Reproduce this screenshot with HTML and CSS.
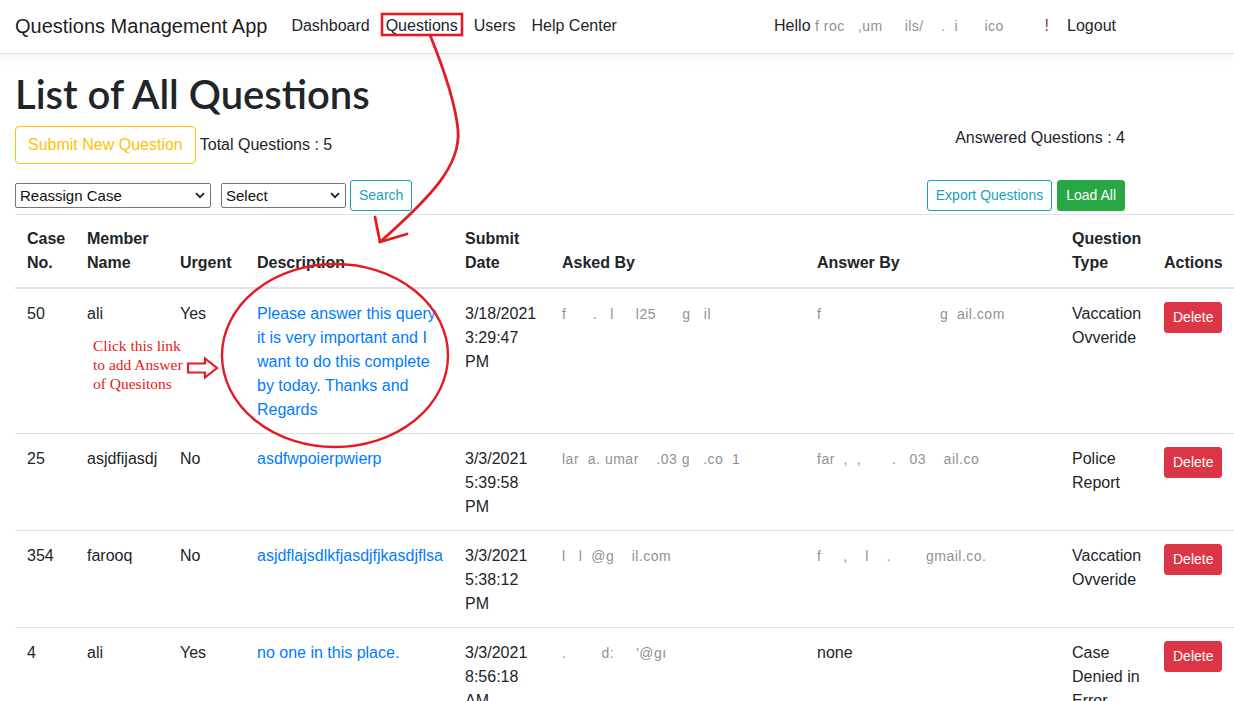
FILE: index.html
```html
<!DOCTYPE html>
<html lang="en">
<head>
<meta charset="utf-8">
<title>Questions Management App</title>
<link rel="stylesheet" href="styles.css">
</head>
<body>
<header class="navbar">
  <a class="brand" href="#">Questions Management App</a>
  <nav class="nav-main">
    <a class="nav-link" href="#">Dashboard</a>
    <a class="nav-link" href="#">Questions</a>
    <a class="nav-link" href="#">Users</a>
    <a class="nav-link" href="#">Help Center</a>
  </nav>
  <div class="nav-right">
    <span class="hello"><span class="hello-text">Hello <span class="redact">f roc   ,um     ils/    .  i      ico</span></span><span class="bang">!</span></span>
    <a class="nav-link" href="#">Logout</a>
  </div>
</header>

<main class="main">
  <h1 class="title">List of All Questions</h1>
  <div class="top-row">
    <div class="top-left">
      <button class="btn btn-outline-warning">Submit New Question</button>
      <span class="count">Total Questions : 5</span>
    </div>
    <span class="count answered">Answered Questions : 4</span>
  </div>
  <div class="tool-row">
    <div class="tool-left">
      <span class="select-wrap sel-1">
        <select class="select"><option>Reassign Case</option></select>
        <svg class="chev" width="10" height="7" viewBox="0 0 10 7"><path d="M1 1.2 5 5.2 9 1.2" fill="none" stroke="#222" stroke-width="1.8"/></svg>
      </span>
      <span class="select-wrap sel-2">
        <select class="select"><option>Select</option></select>
        <svg class="chev" width="10" height="7" viewBox="0 0 10 7"><path d="M1 1.2 5 5.2 9 1.2" fill="none" stroke="#222" stroke-width="1.8"/></svg>
      </span>
      <button class="btn btn-sm btn-outline-info">Search</button>
    </div>
    <div class="tool-right">
      <button class="btn btn-sm btn-outline-info">Export Questions</button>
      <button class="btn btn-sm btn-success">Load All</button>
    </div>
  </div>

  <table class="table">
    <colgroup>
      <col class="c-case"><col class="c-member"><col class="c-urgent"><col class="c-desc"><col class="c-date"><col class="c-asked"><col class="c-answer"><col class="c-type"><col class="c-actions">
    </colgroup>
    <thead>
      <tr>
        <th>Case No.</th><th>Member Name</th><th>Urgent</th><th>Description</th><th>Submit Date</th><th>Asked By</th><th>Answer By</th><th>Question Type</th><th>Actions</th>
      </tr>
    </thead>
    <tbody>
      <tr>
        <td>50</td><td>ali</td><td>Yes</td>
        <td><a class="link" href="#">Please answer this query it is very important and I want to do this complete by today. Thanks and Regards</a></td>
        <td>3/18/2021 3:29:47 PM</td>
        <td><span class="redact">f      .   l     l25      g   il</span></td>
        <td><span class="redact">f                           g  ail.com</span></td>
        <td>Vaccation Ovveride</td>
        <td><button class="btn btn-sm btn-danger">Delete</button></td>
      </tr>
      <tr>
        <td>25</td><td>asjdfijasdj</td><td>No</td>
        <td><a class="link" href="#">asdfwpoierpwierp</a></td>
        <td>3/3/2021 5:39:58 PM</td>
        <td><span class="redact">lar  a. umar    .03 g   .co  1</span></td>
        <td><span class="redact">far  ,  ,       .   03    ail.co</span></td>
        <td>Police Report</td>
        <td><button class="btn btn-sm btn-danger">Delete</button></td>
      </tr>
      <tr>
        <td>354</td><td>farooq</td><td>No</td>
        <td><a class="link" href="#">asjdflajsdlkfjasdjfjkasdjflsa</a></td>
        <td>3/3/2021 5:38:12 PM</td>
        <td><span class="redact">l   l  @g    il.com</span></td>
        <td><span class="redact">f     ,    l    .        gmail.co.</span></td>
        <td>Vaccation Ovveride</td>
        <td><button class="btn btn-sm btn-danger">Delete</button></td>
      </tr>
      <tr>
        <td>4</td><td>ali</td><td>Yes</td>
        <td><a class="link" href="#">no one in this place.</a></td>
        <td>3/3/2021 8:56:18 AM</td>
        <td><span class="redact">.        d:     '@gı</span></td>
        <td>none</td>
        <td>Case Denied in Error</td>
        <td><button class="btn btn-sm btn-danger">Delete</button></td>
      </tr>
    </tbody>
  </table>
</main>

<div class="note">Click this link<br>to add Answer<br>of Quesitons</div>

<svg class="overlay" width="1234" height="701" viewBox="0 0 1234 701" aria-hidden="true">
  <rect x="382" y="14" width="80" height="21" fill="none" stroke="#e31b23" stroke-width="2.6"/>
  <path d="M430 35 C441 62 455 100 458 130 C461 165 432 196 380 242" fill="none" stroke="#e31b23" stroke-width="2.8" stroke-linecap="round"/>
  <path d="M375 217 L380 242 L407 234" fill="none" stroke="#e31b23" stroke-width="2.8" stroke-linecap="round" stroke-linejoin="round"/>
  <ellipse cx="335" cy="355.5" rx="113" ry="91.5" fill="none" stroke="#e31b23" stroke-width="2.4"/>
  <polygon points="188,363.5 205,363.5 205,358.5 217,368 205,377.5 205,372.5 188,372.5" fill="#fff" stroke="#e31b23" stroke-width="2.2"/>
</svg>
</body>
</html>
```

FILE: styles.css
```css
* { box-sizing: border-box; }

html, body { height: 701px; }

body {
  margin: 0;
  position: relative;
  overflow: hidden;
  font-family: "Liberation Sans", Arial, sans-serif;
  font-size: 16px;
  line-height: 1.5;
  color: #212529;
  background: #fff;
}

a { text-decoration: none; }

/* ---------- navbar ---------- */
.navbar {
  display: flex;
  align-items: center;
  height: 54px;
  padding: 0 15px 1px;
  border-bottom: 1px solid #dee2e6;
  box-shadow: 0 4px 12px rgba(0, 0, 0, .05);
}

.brand {
  font-size: 20px;
  line-height: 30px;
  color: rgba(0, 0, 0, .9);
  margin-right: 16px;
}

.nav-main { display: flex; }

.nav-link {
  padding: 0 8px;
  color: #212529;
  line-height: 24px;
}

.nav-right {
  display: flex;
  align-items: center;
  margin-left: auto;
  margin-right: 95px;
}

.hello {
  display: flex;
  justify-content: space-between;
  width: 275px;
  margin-right: 10px;
}

.hello-text { white-space: pre; }

.bang { color: #9b1b30; }

.redact {
  white-space: pre;
  color: #8d9298;
  font-size: 14px;
  letter-spacing: 0.5px;
}

/* ---------- main ---------- */
.main { padding: 17px 15px 0; }

.title {
  margin: 0 0 8px;
  font-family: Lato, "Liberation Sans", sans-serif;
  font-size: 40px;
  font-weight: 600;
  line-height: 47px;
  color: #212529;
}

.top-row {
  display: flex;
  justify-content: space-between;
  align-items: flex-start;
  padding-right: 94px;
}

.top-left {
  display: flex;
  align-items: baseline;
  gap: 4px;
}

.count { line-height: 24px; }

.btn {
  display: inline-block;
  font-family: inherit;
  font-size: 16px;
  line-height: 24px;
  padding: 6px 12px;
  border: 1px solid transparent;
  border-radius: 4px;
  background: transparent;
  cursor: pointer;
}

.btn-sm {
  font-size: 14px;
  line-height: 21px;
  padding: 4px 8px;
  border-radius: 3px;
}

.btn-outline-warning { color: #ffc107; border-color: #ffc107; }
.btn-outline-info { color: #17a2b8; border-color: #17a2b8; }
.btn-success { color: #fff; background: #28a745; border-color: #28a745; }
.btn-danger { color: #fff; background: #dc3545; border-color: #dc3545; }

.tool-row {
  display: flex;
  justify-content: space-between;
  align-items: center;
  margin-top: 16px;
  padding-right: 94px;
}

.tool-left, .tool-right {
  display: flex;
  align-items: center;
}

.tool-right { gap: 5px; }

.select-wrap {
  position: relative;
  display: inline-flex;
}

.sel-1 { width: 196px; margin-right: 10px; }
.sel-2 { width: 125px; margin-right: 4px; }

.select {
  appearance: none;
  -webkit-appearance: none;
  width: 100%;
  height: 25px;
  padding: 0 20px 0 4px;
  font-family: inherit;
  font-size: 15px;
  color: #111;
  background: #fff;
  border: 1px solid #767676;
  border-radius: 2px;
}

.chev {
  position: absolute;
  right: 6px;
  top: 9px;
  pointer-events: none;
}

/* ---------- table ---------- */
.table {
  margin-top: 3px;
  width: 1219px;
  border-collapse: collapse;
  table-layout: fixed;
}

.c-case { width: 60px; }
.c-member { width: 93px; }
.c-urgent { width: 77px; }
.c-desc { width: 208px; }
.c-date { width: 97px; }
.c-asked { width: 255px; }
.c-answer { width: 255px; }
.c-type { width: 92px; }
.c-actions { width: 82px; }

.table th, .table td {
  padding: 12px;
  text-align: left;
  vertical-align: top;
  border-top: 1px solid #dee2e6;
}

.table td { padding-top: 13px; padding-bottom: 11px; }

.table th {
  vertical-align: bottom;
  font-weight: 700;
  border-bottom: 2px solid #dee2e6;
}

.link { color: #007bff; }

/* ---------- annotations ---------- */
.note {
  position: absolute;
  left: 93px;
  top: 336px;
  font-family: "Liberation Serif", "Times New Roman", serif;
  font-size: 15.5px;
  line-height: 19px;
  color: #e31b23;
}

.overlay {
  position: absolute;
  left: 0;
  top: 0;
  pointer-events: none;
}
```
